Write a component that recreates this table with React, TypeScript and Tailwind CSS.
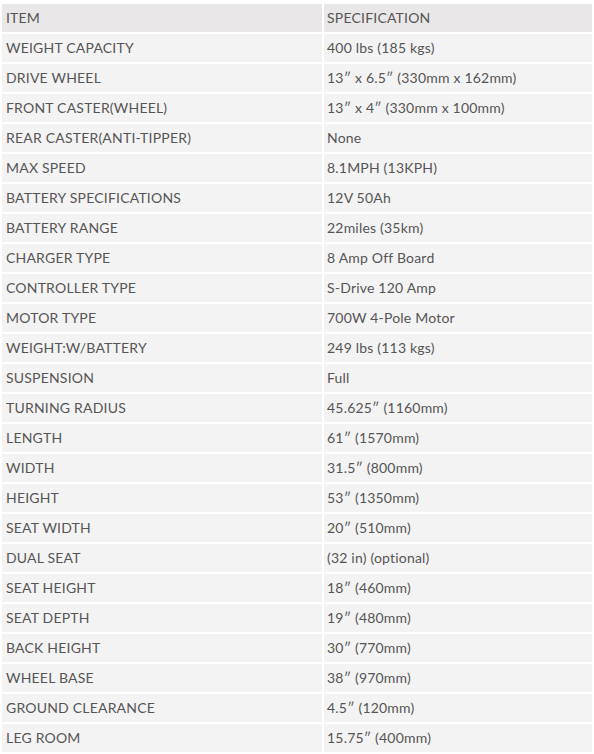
import React from "react";

const rows: [string, string][] = [
  ["WEIGHT CAPACITY", "400 lbs (185 kgs)"],
  ["DRIVE WHEEL", "13″ x 6.5″ (330mm x 162mm)"],
  ["FRONT CASTER(WHEEL)", "13″ x 4″ (330mm x 100mm)"],
  ["REAR CASTER(ANTI-TIPPER)", "None"],
  ["MAX SPEED", "8.1MPH (13KPH)"],
  ["BATTERY SPECIFICATIONS", "12V 50Ah"],
  ["BATTERY RANGE", "22miles (35km)"],
  ["CHARGER TYPE", "8 Amp Off Board"],
  ["CONTROLLER TYPE", "S-Drive 120 Amp"],
  ["MOTOR TYPE", "700W 4-Pole Motor"],
  ["WEIGHT:W/BATTERY", "249 lbs (113 kgs)"],
  ["SUSPENSION", "Full"],
  ["TURNING RADIUS", "45.625″ (1160mm)"],
  ["LENGTH", "61″ (1570mm)"],
  ["WIDTH", "31.5″ (800mm)"],
  ["HEIGHT", "53″ (1350mm)"],
  ["SEAT WIDTH", "20″ (510mm)"],
  ["DUAL SEAT", "(32 in) (optional)"],
  ["SEAT HEIGHT", "18″ (460mm)"],
  ["SEAT DEPTH", "19″ (480mm)"],
  ["BACK HEIGHT", "30″ (770mm)"],
  ["WHEEL BASE", "38″ (970mm)"],
  ["GROUND CLEARANCE", "4.5″ (120mm)"],
  ["LEG ROOM", "15.75″ (400mm)"],
];

export default function App() {
  return (
    <div
      className="w-[594px] h-[754px] bg-white px-[2px] pt-[4px] pb-[2px] flex flex-col gap-[2px] text-[14px] text-[#555555] tracking-[0.2px]"
      style={{ fontFamily: "Lato, 'Open Sans', sans-serif" }}
    >
      <div className="flex gap-[2px] h-[28px]">
        <div className="w-[320px] bg-[#e9e7e7] flex items-center pl-[4px] pb-[1px]">ITEM</div>
        <div className="w-[268px] bg-[#e9e7e7] flex items-center pl-[3px] pb-[1px]">SPECIFICATION</div>
      </div>
      {rows.map(([a, b]) => (
        <div key={a} className="flex gap-[2px] h-[28px]">
          <div className="w-[320px] bg-[#f4f3f3] flex items-center pl-[4px] pb-[1px]">{a}</div>
          <div className="w-[268px] bg-[#f4f3f3] flex items-center pl-[3px] pb-[1px]">{b}</div>
        </div>
      ))}
    </div>
  );
}
